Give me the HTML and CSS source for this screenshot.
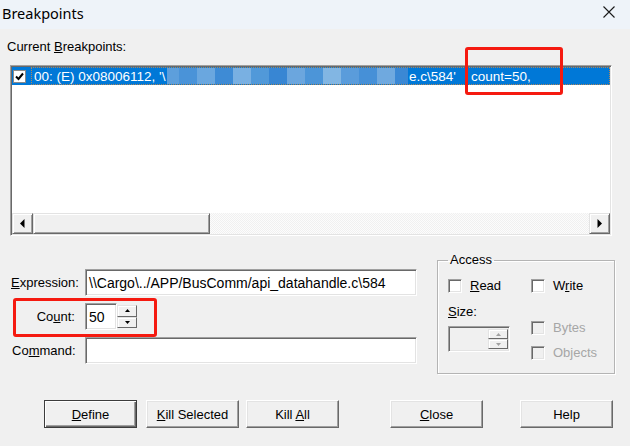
FILE: index.html
```html
<!DOCTYPE html>
<html>
<head>
<meta charset="utf-8">
<link rel="stylesheet" href="styles.css">
</head>
<body>
<div class="window">
  <div class="titlebar">
    <span class="title">Breakpoints</span>
    <span class="close">
      <svg width="12" height="12" viewBox="0 0 12 12"><path d="M0.5 0.5 L11.5 11.5 M11.5 0.5 L0.5 11.5" stroke="#1a1a1a" stroke-width="1.1" fill="none"/></svg>
    </span>
  </div>
  <div class="dialog">
    <div class="cap">Current <u>B</u>reakpoints:</div>
    <div class="listbox">
      <div class="rows">
        <div class="row sel">
          <span class="chk on"><svg width="9" height="9" viewBox="0 0 9 9"><path d="M1 4.5 L3.5 7 L8 1.5" stroke="#000" stroke-width="2" fill="none"/></svg></span>
          <span class="focus">
            <span class="t1">00: (E) 0x08006112, '\</span><span class="redact"></span><span class="t2">e.c\584'</span><span class="t3">count=50,</span>
          </span>
        </div>
      </div>
      <div class="hscroll">
        <span class="sbtn"><svg width="5" height="9" viewBox="0 0 5 9"><path d="M4.5 0 L0 4.5 L4.5 9 Z" fill="#000"/></svg></span>
        <span class="thumb"></span>
        <span class="track"></span>
        <span class="sbtn"><svg width="5" height="9" viewBox="0 0 5 9"><path d="M0.5 0 L5 4.5 L0.5 9 Z" fill="#000"/></svg></span>
      </div>
    </div>
    <div class="form">
      <div class="fields">
        <label class="lbl l-expr"><u>E</u>xpression:</label>
        <div class="edit"><span class="val">\\Cargo\../APP/BusComm/api_datahandle.c\584</span></div>
        <label class="lbl l-count">Co<u>u</u>nt:</label>
        <div class="countbox">
          <div class="edit small"><span class="val">50</span></div>
          <div class="spin">
            <span class="sp"><svg width="5" height="3" viewBox="0 0 5 3"><path d="M2.5 0 L5 3 L0 3 Z" fill="#000"/></svg></span>
            <span class="sp"><svg width="5" height="3" viewBox="0 0 5 3"><path d="M0 0 L5 0 L2.5 3 Z" fill="#000"/></svg></span>
          </div>
        </div>
        <label class="lbl l-cmd">Co<u>m</u>mand:</label>
        <div class="edit"></div>
      </div>
      <fieldset class="group">
        <legend>Access</legend>
        <div class="gcols">
          <div class="gcol">
            <div class="opt"><span class="chk"></span><span class="otext"><u>R</u>ead</span></div>
            <div class="sizelbl"><u>S</u>ize:</div>
            <div class="combo">
              <div class="spin dis">
                <span class="sp"><svg width="5" height="3" viewBox="0 0 5 3"><path d="M2.5 0 L5 3 L0 3 Z" fill="#a0a0a0"/></svg></span>
                <span class="sp"><svg width="5" height="3" viewBox="0 0 5 3"><path d="M0 0 L5 0 L2.5 3 Z" fill="#a0a0a0"/></svg></span>
              </div>
            </div>
          </div>
          <div class="gcol">
            <div class="opt"><span class="chk"></span><span class="otext">W<u>r</u>ite</span></div>
            <div class="opt dis o-bytes"><span class="chk"></span><span class="otext">Bytes</span></div>
            <div class="opt dis o-obj"><span class="chk"></span><span class="otext">Objects</span></div>
          </div>
        </div>
      </fieldset>
    </div>
    <div class="buttons">
      <button class="btn def"><u>D</u>efine</button>
      <button class="btn"><u>K</u>ill Selected</button>
      <button class="btn">Kill <u>A</u>ll</button>
      <button class="btn b-close"><u>C</u>lose</button>
      <button class="btn b-help">Help</button>
    </div>
  </div>
  <div class="mark mark-count-top"></div>
  <div class="mark mark-count-field"></div>
</div>
</body>
</html>
```
FILE: styles.css
```css
* { box-sizing: border-box; }
html, body { margin: 0; padding: 0; }
body {
  width: 630px;
  height: 446px;
  overflow: hidden;
  background: #f0f0f0;
  font-family: "Liberation Sans", Arial, sans-serif;
  font-size: 13px;
  color: #000;
}
u { text-decoration: underline; text-underline-offset: 1px; }
.window { position: relative; width: 630px; height: 446px; }

.titlebar {
  height: 29px;
  background: #eef3f9;
  display: flex;
  align-items: center;
  justify-content: space-between;
  padding: 0 15px 0 2px;
}
.title { font-family: "Noto Sans", "Open Sans", sans-serif; font-size: 14.5px; padding-bottom: 3px; }
.close { display: flex; padding-bottom: 6px; }

.dialog { padding: 10px 0 0 10px; }
.cap { height: 16px; line-height: 16px; margin-left: -3px; }

.listbox {
  margin-top: 10px;
  width: 602px;
  height: 171px;
  border: 1px solid;
  border-color: #a0a0a0 #ffffff #ffffff #a0a0a0;
  box-shadow: inset 1px 1px #696969, inset -1px -1px #e3e3e3;
  padding: 1px;
  background: #fff;
  display: flex;
  flex-direction: column;
}
.rows { flex: 1; }
.row { height: 18px; display: flex; align-items: center; }
.row.sel { background: #0078d7; color: #fff; }
.chk {
  width: 13px; height: 13px;
  background: #fff;
  border: 1px solid;
  border-color: #a0a0a0 #fff #fff #a0a0a0;
  box-shadow: inset 1px 1px #696969, inset -1px -1px #e3e3e3;
  display: flex; align-items: center; justify-content: center;
  flex: none;
}
.row .chk { margin-left: 1px; border-color: #8a8a8a; box-shadow: none; }
.focus {
  margin-left: 5px;
  flex: 1;
  height: 18px;
  border: 1px dotted #b0865a;
  display: flex;
  align-items: center;
  white-space: nowrap;
  font-size: 13.5px;
}
.t1 { width: 135px; padding-left: 2px; flex: none; }
.redact {
  width: 241px; height: 16px; flex: none;
  background: linear-gradient(90deg,
    #5d9fdc 0 12px, #4a93d8 12px 30px, #6aa7df 30px 48px, #3e8bd5 48px 66px,
    #79b0e2 66px 84px, #5199d9 84px 102px, #3886d3 102px 120px, #6ba6de 120px 138px,
    #4c95d8 138px 156px, #82b6e3 156px 174px, #5a9cdb 174px 192px, #4690d7 192px 210px,
    #6fa9df 210px 228px, #3b88d4 228px);
}
.t2 { flex: none; width: 63px; padding-left: 1px; }
.t3 { flex: none; }

.hscroll { height: 21px; display: flex; }
.sbtn {
  width: 21px; height: 21px; flex: none;
  background: #f0f0f0;
  border: 1px solid;
  border-color: #e3e3e3 #696969 #696969 #e3e3e3;
  box-shadow: inset 1px 1px #fff, inset -1px -1px #a0a0a0;
  display: flex; align-items: center; justify-content: center;
}
.thumb {
  width: 177px; flex: none;
  background: #f0f0f0;
  border: 1px solid;
  border-color: #e3e3e3 #696969 #696969 #e3e3e3;
  box-shadow: inset 1px 1px #fff, inset -1px -1px #a0a0a0;
}
.track {
  flex: 1;
  background: repeating-conic-gradient(#f0f0f0 0 25%, #fcfcfc 0 50%) 0 0 / 2px 2px;
}

.form { display: flex; align-items: flex-start; margin-top: 16px; }
.fields {
  margin-top: 17px;
  margin-left: 1px;
  width: 406px;
  display: grid;
  grid-template-columns: 74px 332px;
  grid-auto-rows: 27px;
  row-gap: 7px;
  align-items: center;
}
.lbl { line-height: 16px; }
.l-count { justify-self: end; margin-right: 10px; }
.l-cmd { margin-left: 1px; }
.edit {
  height: 27px;
  background: #fff;
  border: 1px solid;
  border-color: #a0a0a0 #fff #fff #a0a0a0;
  box-shadow: inset 1px 1px #696969, inset -1px -1px #e3e3e3;
  display: flex; align-items: center;
  padding-left: 3px;
  font-size: 14px;
  white-space: nowrap;
  overflow: hidden;
}
.countbox { display: flex; height: 27px; }
.edit.small { width: 32px; }
.spin { width: 20px; display: flex; flex-direction: column; padding: 2px 0; }
.sp {
  flex: 1;
  background: #f0f0f0;
  border: 1px solid;
  border-color: #e3e3e3 #696969 #696969 #e3e3e3;
  box-shadow: inset 1px 1px #fff;
  display: flex; align-items: center; justify-content: center;
}

.group {
  margin: 0 0 0 20px;
  width: 175px;
  height: 122px;
  border: 1px solid #b4b4b4;
  box-shadow: inset 1px 1px #fff, 1px 1px #fff;
  padding: 11px 0 0 10px;
}
.group legend { padding: 0 2px; line-height: 16px; }
.gcols { display: flex; }
.gcol { width: 83px; display: flex; flex-direction: column; }
.opt { display: flex; align-items: center; height: 14px; }
.opt .chk { width: 14px; height: 14px; }
.otext { margin-left: 8px; line-height: 16px; }
.opt.dis .chk { background: #f0f0f0; }
.opt.dis .otext { color: #a6a6a6; }
.o-bytes { margin-top: 28px; }
.o-obj { margin-top: 11px; }
.sizelbl { margin-top: 11px; line-height: 16px; }
.combo {
  margin-top: 6px;
  width: 62px; height: 26px;
  background: #f0f0f0;
  border: 1px solid;
  border-color: #a0a0a0 #fff #fff #a0a0a0;
  box-shadow: inset 1px 1px #696969, inset -1px -1px #e3e3e3;
  display: flex; justify-content: flex-end;
  padding: 1px 1px 1px 0;
}
.combo .spin { padding: 1px 0; }

.buttons { display: flex; margin-top: 26px; padding-left: 34px; }
.btn {
  width: 93px; height: 28px;
  font-family: "Liberation Sans", Arial, sans-serif;
  font-size: 13px;
  color: #000;
  background: #f0f0f0;
  border: 1px solid;
  border-color: #fff #696969 #696969 #fff;
  box-shadow: inset -1px -1px #a0a0a0, inset 1px 1px #e3e3e3;
  padding: 0;
  margin-right: 9px;
}
.btn + .btn { margin-right: 7px; }
.btn.def { border: 1px solid #3c3c3c; box-shadow: inset 1px 1px #fff, inset -1px -1px #696969, inset -2px -2px #a0a0a0; }
.b-close { margin-left: 44px; margin-right: 37px !important; }

.mark {
  position: absolute;
  border: 3px solid #f51a10;
  border-radius: 3px;
}
.mark-count-top { left: 465px; top: 47px; width: 98px; height: 48px; }
.mark-count-field { left: 13px; top: 298px; width: 144px; height: 39px; }
```
